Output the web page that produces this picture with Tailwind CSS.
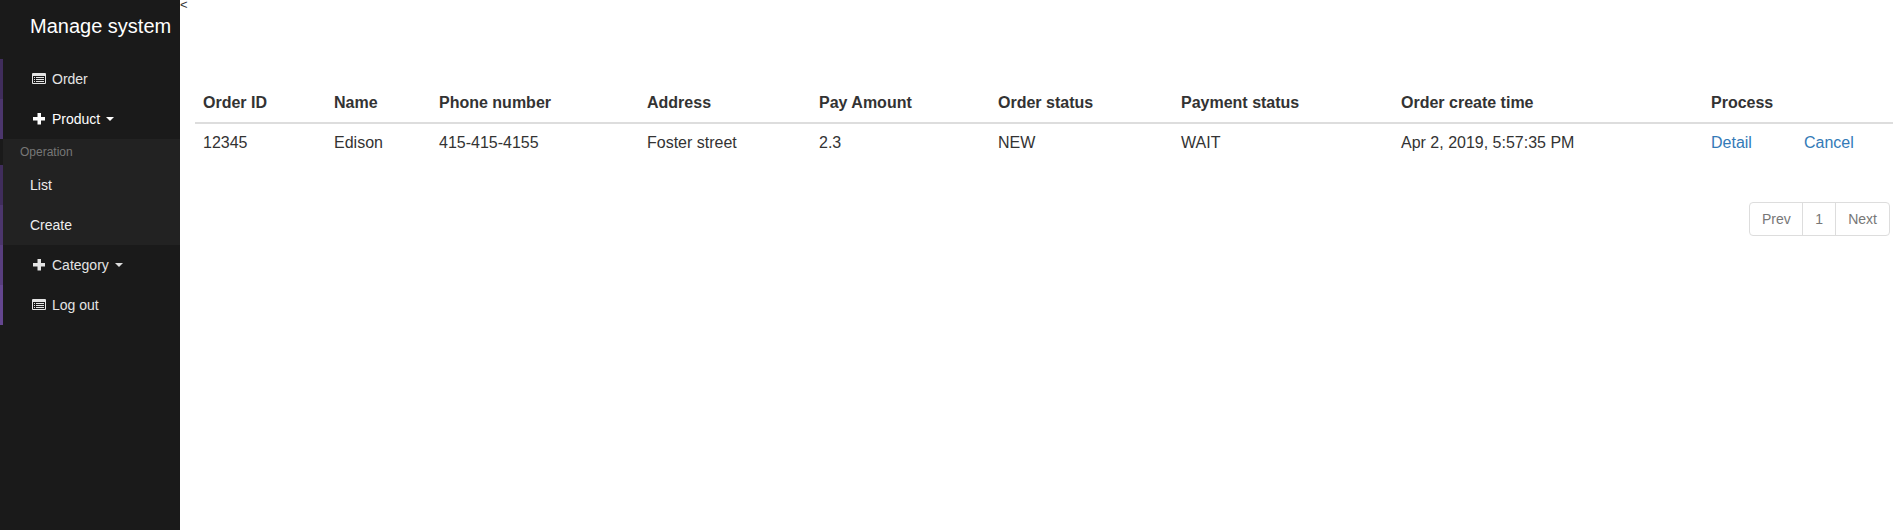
<!DOCTYPE html>
<html lang="en">
<head>
<meta charset="utf-8">
<title>Manage system</title>
<script src="https://cdn.jsdelivr.net/npm/@tailwindcss/browser@4"></script>
</head>
<body class="flex h-screen overflow-hidden bg-white font-['Liberation_Sans',Arial,sans-serif] text-sm text-[#333]">
<svg class="hidden">
  <symbol id="list" viewBox="0 0 14 14"><path fill="currentColor" fill-rule="evenodd" d="M1 1h12a1 1 0 0 1 1 1v9a1 1 0 0 1-1 1H1a1 1 0 0 1-1-1V2a1 1 0 0 1 1-1zM1 4v7h12V4zM2 5h1v1H2zM4 5h8v1H4zM2 7h1v1H2zM4 7h8v1H4zM2 9h1v1H2zM4 9h8v1H4z"/></symbol>
  <symbol id="plus" viewBox="0 0 14 14"><path fill="currentColor" d="M5.500 1h3.500v4H13v3.500H9v4H5.500v-4H1V5h4.500z"/></symbol>
</svg>
<nav class="w-[180px] shrink-0 bg-[#1a1a1a] text-[#e4e4e4]">
  <div class="h-[59px] pl-[30px] text-xl leading-[53px] whitespace-nowrap text-white">Manage system</div>
  <a class="flex h-10 items-center border-l-3 border-[#402d5c] pl-[29px]"><svg class="mr-1.5 size-3.5"><use href="#list"/></svg>Order</a>
  <a class="flex h-10 items-center border-l-3 border-[#4c366d] pl-[29px] text-white"><svg class="mr-1.5 size-3.5"><use href="#plus"/></svg>Product<span class="ml-1.5 border-x-4 border-t-4 border-x-transparent border-t-white"></span></a>
  <div class="bg-[#222]">
    <div class="h-[26px] border-l-3 border-[#1a1a1a] pl-[17px] text-xs leading-[26px] text-[#777]">Operation</div>
    <a class="flex h-10 items-center border-l-3 border-[#402d5c] pl-[27px] text-[#eee]">List</a>
    <a class="flex h-10 items-center border-l-3 border-[#4c366d] pl-[27px] text-[#eee]">Create</a>
  </div>
  <a class="flex h-10 items-center border-l-3 border-[#583e7e] pl-[29px]"><svg class="mr-1.5 size-3.5"><use href="#plus"/></svg>Category<span class="ml-1.5 border-x-4 border-t-4 border-x-transparent border-t-[#ddd]"></span></a>
  <a class="flex h-10 items-center border-l-3 border-[#64468f] pl-[29px]"><svg class="mr-1.5 size-3.5"><use href="#list"/></svg>Log out</a>
</nav>
<main class="flex min-w-0 grow flex-col">
  <div class="h-[83px] text-[13px] leading-[9px]">&lt;</div>
  <table class="ml-[15px] w-[1698px] table-fixed border-collapse text-left text-base leading-[23px]">
    <colgroup><col class="w-[131px]"><col class="w-[105px]"><col class="w-[208px]"><col class="w-[172px]"><col class="w-[179px]"><col class="w-[183px]"><col class="w-[220px]"><col class="w-[310px]"><col class="w-[93px]"><col class="w-[97px]"></colgroup>
    <thead><tr class="h-10 border-b-2 border-[#ddd] whitespace-nowrap [&>th]:px-2">
      <th>Order ID</th><th>Name</th><th>Phone number</th><th>Address</th><th>Pay Amount</th><th>Order status</th><th>Payment status</th><th>Order create time</th><th>Process</th><th></th>
    </tr></thead>
    <tbody><tr class="h-10 whitespace-nowrap [&>td]:px-2 [&>td]:pb-0.5">
      <td>12345</td><td>Edison</td><td>415-415-4155</td><td>Foster street</td><td>2.3</td><td>NEW</td><td>WAIT</td><td>Apr 2, 2019, 5:57:35 PM</td><td class="text-[#337ab7]">Detail</td><td class="text-[#337ab7]">Cancel</td>
    </tr></tbody>
  </table>
  <div class="mt-[39px] mr-[3px] flex h-[34px] self-end rounded border border-[#ddd] leading-8 text-[#777]">
    <a class="px-[11.500px]">Prev</a><a class="w-[34px] border-x border-[#ddd] text-center">1</a><a class="px-3">Next</a>
  </div>
</main>
</body>
</html>
